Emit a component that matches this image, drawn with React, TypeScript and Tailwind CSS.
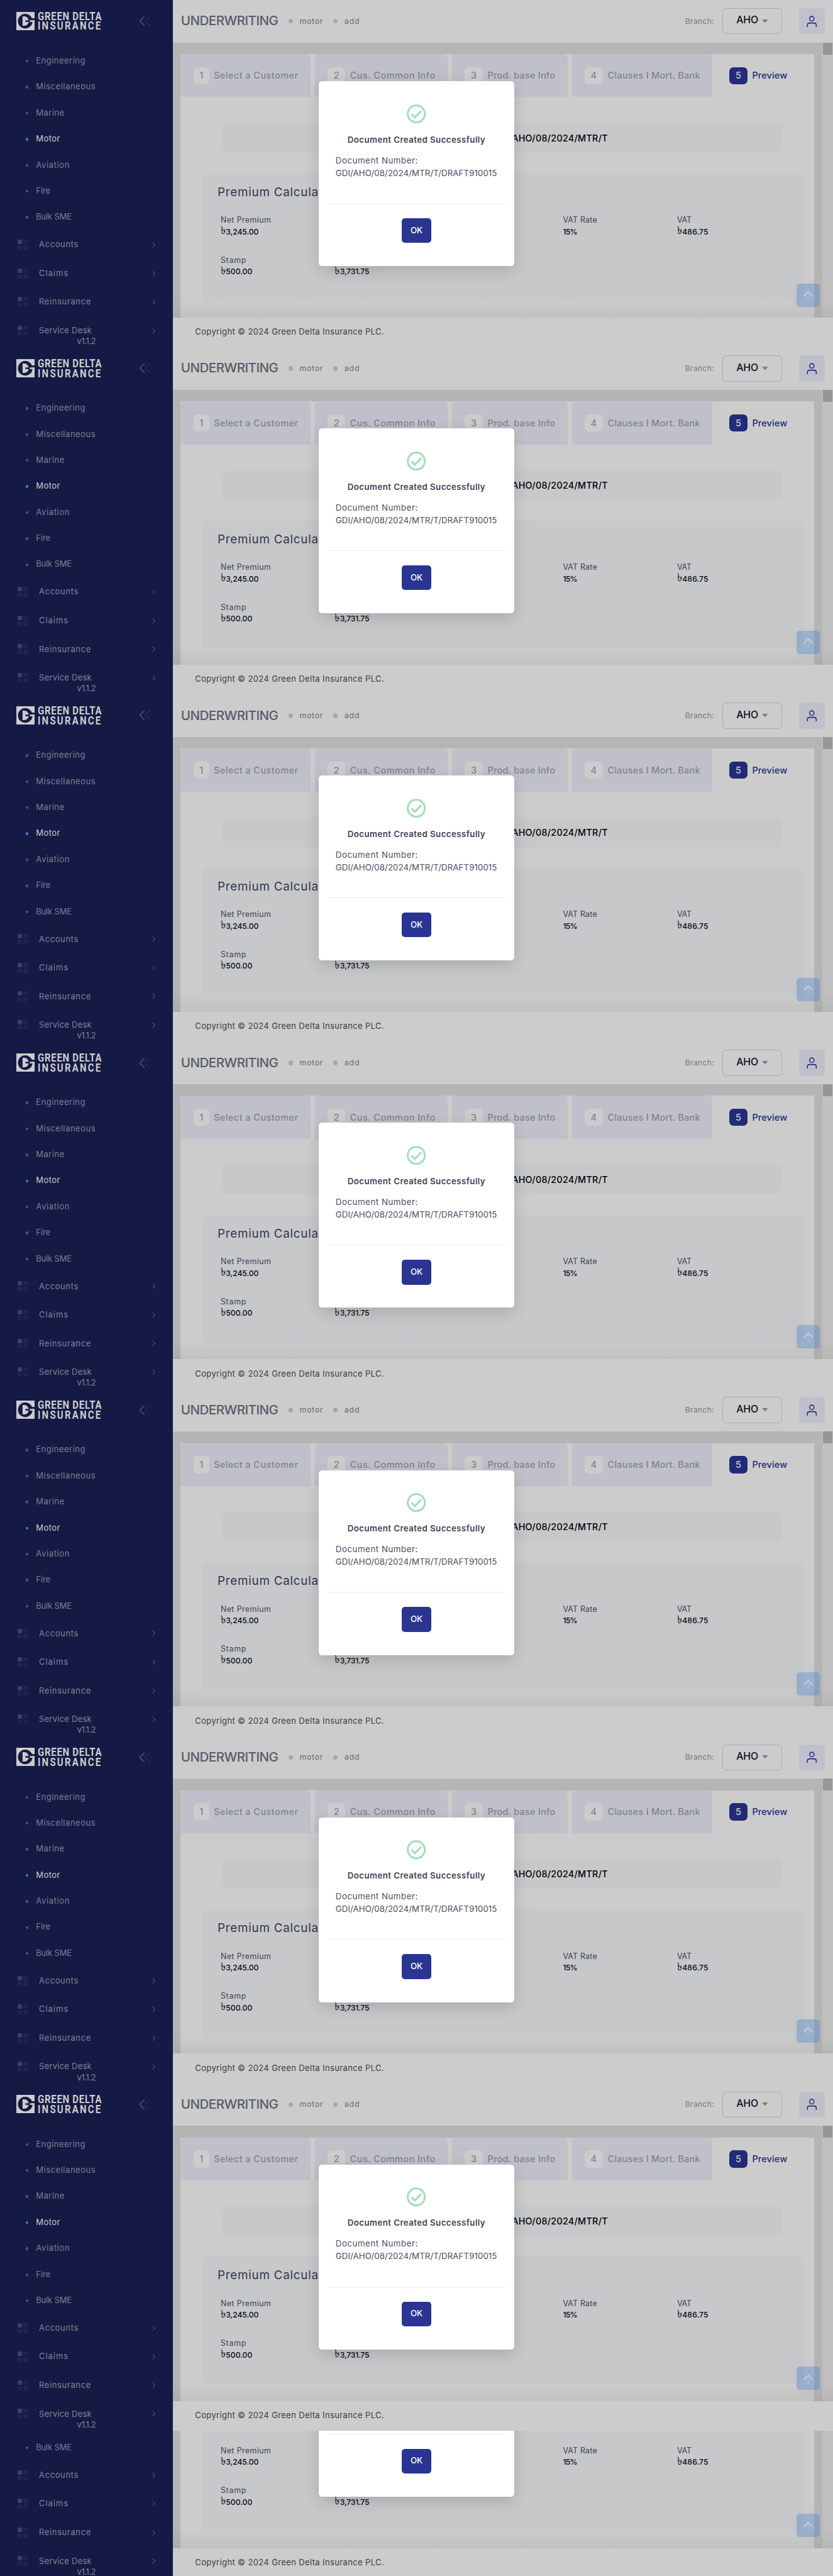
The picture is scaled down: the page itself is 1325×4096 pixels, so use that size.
import React from "react";

const subItems = [
  { label: "Engineering", cls: "tracking-[0.48px]" },
  { label: "Miscellaneous", cls: "tracking-[0.53px]" },
  { label: "Marine", cls: "tracking-[0.5px]" },
  { label: "Motor", cls: "tracking-[0.46px]", active: true },
  { label: "Aviation", cls: "tracking-[0.64px]" },
  { label: "Fire", cls: "tracking-[-0.08px]" },
  { label: "Bulk SME", cls: "tracking-[-0.18px]" },
];

const groups = [
  { label: "Accounts", cls: "tracking-[0.6px]" },
  { label: "Claims", cls: "tracking-[0.93px]" },
  { label: "Reinsurance", cls: "tracking-[0.62px]" },
  { label: "Service Desk", cls: "tracking-[0.23px]" },
];

const tabs = [
  { n: "1", label: "Select a Customer", tab: "w-[207px] pl-[20.7px]", box: "w-[24.8px]", text: "tracking-[0.45px]" },
  { n: "2", label: "Cus. Common Info", tab: "w-[211.2px] pl-[20px]", box: "w-[28.3px]", text: "tracking-[0.48px]" },
  { n: "3", label: "Prod. base Info", tab: "w-[183.6px] pl-[20px]", box: "w-[29px]", text: "tracking-[0.21px]" },
  { n: "4", label: "Clauses I Mort. Bank", tab: "w-[223.6px] pl-[20px]", box: "w-[29.6px]", text: "tracking-[0.24px]" },
];

const cells = [
  { label: "Net Premium", value: "3,245.00", taka: true, l: "tracking-[0.42px]", v: "tracking-[-0.07px]" },
  null,
  null,
  { label: "VAT Rate", value: "15%", taka: false, l: "tracking-[0.22px]", v: "tracking-[-0.7px]" },
  { label: "VAT", value: "486.75", taka: true, l: "", v: "tracking-[0.1px]" },
  { label: "Stamp", value: "500.00", taka: true, l: "tracking-[0.78px]", v: "tracking-[0px]" },
  { label: "", value: "3,731.75", taka: true, l: "", v: "tracking-[-0.2px]" },
];

function LogoMark() {
  return (
    <svg viewBox="0 0 42 42" className="h-[29px] w-[29px] shrink-0">
      <rect width="42" height="42" fill="#cccccc" />
      <circle cx="20.5" cy="21.2" r="16.8" fill="#151a45" />
      <rect x="33" y="14.7" width="9" height="4.5" fill="#151a45" />
      <path d="M14.3 10.3H19.5A11 11 0 0 1 19.5 32H14.3Z" fill="#cccccc" />
      <rect x="21" y="19.2" width="10.5" height="3.8" fill="#151a45" />
      <rect x="31" y="19.2" width="11" height="3.8" fill="#cccccc" />
    </svg>
  );
}

// `tail` screens show only their lower part, so the content above it is left out.
type TailProps = { tail?: boolean };

function Sidebar({ tail }: TailProps) {
  return (
    <aside className="flex h-full w-[274.7px] shrink-0 flex-col bg-[#151a45]">
      <div className="flex h-[76.6px] shrink-0 items-start pt-[18.7px] pl-[26.2px]">
        {!tail && (
          <>
            <LogoMark />
            <div className="ml-[4.6px] flex w-[160.8px] flex-col font-['Roboto',sans-serif] text-[19.2px] leading-[15.8px] font-bold text-[#cccccc]">
              <span className="-mt-[1px] origin-left scale-x-[0.78] whitespace-nowrap tracking-[0.95px]">GREEN DELTA</span>
              <span className="origin-left scale-x-[0.78] whitespace-nowrap tracking-[2.85px]">INSURANCE</span>
            </div>
            <svg viewBox="0 0 26 24" className="mt-[6.6px] h-[16.6px] w-[18px]" fill="none" strokeWidth="3" strokeLinecap="round" strokeLinejoin="round">
              <path d="M12 2L2 12L12 22" stroke="#434468" />
              <path d="M24 2L14 12L24 22" stroke="#22274f" />
            </svg>
          </>
        )}
      </div>
      <nav className="flex h-[455.5px] shrink-0 flex-col overflow-hidden">
        {subItems.map((s, i) => (
          <div key={s.label} className="flex h-[41.4px] shrink-0 items-center gap-[11.8px] pl-[41.4px]">
            {(!tail || i === subItems.length - 1) && (
              <>
                <span className={s.active ? "h-[4.4px] w-[4.1px] rounded-full bg-[#2f81cc]" : "h-[4.4px] w-[4.1px] rounded-full bg-[#505471]"} />
                <span className={`${s.cls} -mt-px text-[13px] whitespace-nowrap ${s.active ? "text-[#cccccc]" : "text-[#7b7d8e]"}`}>{s.label}</span>
              </>
            )}
          </div>
        ))}
        {groups.map((g) => (
          <div key={g.label} className="flex h-[45.55px] shrink-0 items-center pr-[27.2px] pl-[27.9px]">
            <div className="grid w-[16.2px] grid-cols-2 gap-[1.8px]">
              <span className="h-[7px] rounded-[1.5px] bg-[#3d3f60]" />
              <span className="h-[7px] rounded-[1.5px] bg-[#20244e]" />
              <span className="h-[7px] rounded-[1.5px] bg-[#20244e]" />
              <span className="h-[7px] rounded-[1.5px] bg-[#20244e]" />
            </div>
            <span className={`${g.cls} ml-[18px] flex-1 text-[13px] whitespace-nowrap text-[#7f8294]`}>{g.label}</span>
            <svg viewBox="0 0 8 12" className="h-[8.3px] w-[5.5px]" fill="none" stroke="#656880" strokeWidth="1.4" strokeLinecap="round" strokeLinejoin="round">
              <path d="M1 1L7 6L1 11" />
            </svg>
          </div>
        ))}
      </nav>
      <span className="ml-[122.5px] text-[13px] leading-[20px] tracking-[-0.4px] text-[#7f8294]">v1.1.2</span>
    </aside>
  );
}

function Header() {
  return (
    <>
      <h1 className="text-[20.6px] font-medium tracking-[-0.54px] text-[#565d69]">UNDERWRITING</h1>
      <span className="ml-[16.4px] h-[7.4px] w-[7.4px] rounded-full bg-[#a5a9ae]" />
      <span className="ml-[10.4px] text-[12.3px] tracking-[0.7px] text-[#636a77]">motor</span>
      <span className="ml-[15.8px] h-[7.4px] w-[7.4px] rounded-full bg-[#a5a9ae]" />
      <span className="ml-[10.4px] text-[12.3px] tracking-[0.95px] text-[#636a77]">add</span>
      <span className="ml-auto text-[12.2px] tracking-[0.27px] text-[#747983]">Branch:</span>
      <div className="ml-[13.1px] flex h-[41.4px] w-[94.5px] items-center rounded-[6px] border border-[#a9aabf] pb-[3px] pl-[21px]">
        <span className="text-[15.8px] font-medium text-[#0a0e1f]">AHO</span>
        <svg viewBox="0 0 14 8" className="mt-[2px] ml-[6px] h-[5.4px] w-[9.7px]">
          <path d="M0 0H14L7 8Z" fill="#7d7d7d" />
        </svg>
      </div>
      <div className="ml-[26.9px] flex h-[41.4px] w-[41.4px] items-center justify-center rounded-[5.5px] bg-[#bfc0ca]">
        <svg viewBox="0 0 24 26" className="h-[18px] w-[16.6px]" fill="none" stroke="#222b78" strokeWidth="2.2" strokeLinecap="round">
          <circle cx="12" cy="6.8" r="5.2" />
          <path d="M1.8 25V21.5Q1.8 16.8 7 16.8H17Q22.2 16.8 22.2 21.5V25" />
        </svg>
      </div>
    </>
  );
}

function Tabs() {
  return (
    <div className="flex h-full gap-[6.9px] text-[14.5px] font-[450] whitespace-nowrap text-[#7f8493]">
      {tabs.map((t) => (
        <div key={t.n} className={`${t.tab} flex shrink-0 items-center rounded-t-[6px] bg-[#c0c0ca]`}>
          <span className={`${t.box} flex h-[27.6px] shrink-0 items-center justify-center rounded-[6.5px] bg-[#cccccc] font-medium`}>{t.n}</span>
          <span className={`${t.text} ml-[7.4px]`}>{t.label}</span>
        </div>
      ))}
      <div className="flex flex-1 items-center pl-[20px] text-[#222b78]">
        <span className="flex h-[27.6px] w-[29px] shrink-0 items-center justify-center rounded-[6.5px] bg-[#222b78] font-medium text-[#cccccc]">5</span>
        <span className="ml-[7.4px] tracking-[0.1px]">Preview</span>
      </div>
    </div>
  );
}

function PremiumCard({ tail }: TailProps) {
  return (
    <section className="ml-[33.8px] h-[202.9px] w-[957.2px] rounded-[8px] bg-[#c6c8ca] pt-[17.7px]">
      <h2 className="h-[24px] pl-[25.2px] text-[18.8px] leading-[24px] tracking-[0.76px] text-[#35354a]">{!tail && "Premium Calcula"}</h2>
      <div className="mt-[23.6px] grid grid-cols-[repeat(5,181.5px)] gap-y-[26.5px] pl-[30px] text-[12.4px] leading-[18.5px] whitespace-nowrap">
        {cells.map((c, i) =>
          c ? (
            <div key={i} className="h-[37px]">
              <div className={`${c.l} h-[18.5px] text-[#414154]`}>{c.label}</div>
              <div className={`${c.v} flex h-[18.5px] text-[12.2px] font-[450] text-[#0b0d16]`}>
                {c.taka && <span className="-mt-[2.5px] w-[8.4px] font-sans text-[16.5px] font-normal tracking-normal">৳</span>}
                <span>{c.value}</span>
              </div>
            </div>
          ) : (
            <div key={i} />
          ),
        )}
      </div>
    </section>
  );
}

function Modal({ tail }: TailProps) {
  return (
    <div className="absolute top-[129.2px] left-[507.2px] z-10 flex h-[294px] w-[310.5px] flex-col rounded-[5.5px] bg-white shadow-[0_8px_24px_rgba(0,0,0,0.15)]">
      <div className="flex h-[193.8px] shrink-0 flex-col pt-[36.6px]">
        {!tail && (
          <>
            <svg viewBox="0 0 44 44" className="mx-auto h-[30.4px] w-[30.4px] shrink-0" fill="none" stroke="#a9dfbf">
              <circle cx="22" cy="22" r="19.6" strokeWidth="4.8" />
              <path d="M11 22.5L18.5 30L33.5 15" strokeWidth="5" />
            </svg>
            <div className="mt-[15.5px] text-center text-[13.3px] leading-[20px] font-semibold tracking-[0.42px] whitespace-nowrap text-[#3f4254]">Document Created Successfully</div>
            <div className="mt-[14.2px] ml-[26.6px] text-[13.3px] leading-[19.7px] whitespace-nowrap text-[#4b4e62]">
              <div className="tracking-[0.53px]">Document Number:</div>
              <div className="tracking-[0.065px]">GDI/AHO/08/2024/MTR/T/DRAFT910015</div>
            </div>
          </>
        )}
      </div>
      <div className="mx-[13.6px] h-px shrink-0 bg-[#ececf4]" />
      <button className="mx-auto mt-[23px] h-[39.3px] w-[46.9px] rounded-[5px] bg-[#2a3592] text-[13.3px] font-medium tracking-[-0.35px] text-white">OK</button>
    </div>
  );
}

function Screen({ tail }: TailProps) {
  return (
    <div className="relative flex h-[552.1px] w-[1325px] shrink-0 overflow-hidden bg-[#cccccc]">
      <Sidebar tail={tail} />
      <main className="flex min-w-0 flex-1 flex-col">
        <header className="flex h-[67.6px] shrink-0 items-center bg-[#cccccc] px-[13.1px] whitespace-nowrap">{!tail && <Header />}</header>
        <div className="relative flex h-[437.4px] shrink-0 bg-[#b5b5b5] pl-[12.4px]">
          <div className="mt-[18.6px] w-[1007.5px] shrink-0 bg-[#cccccc]">
            <div className="h-[68.3px]">{!tail && <Tabs />}</div>
            <div className="mt-[41.4px] ml-[66.9px] flex h-[46.9px] w-[890.9px] items-center justify-end rounded-[8px] bg-[#c6c8ca] pr-[278px] text-[14.3px] font-[450] tracking-[0.3px] text-black">
              {!tail && "AHO/08/2024/MTR/T"}
            </div>
            <div className="h-[33.1px]" />
            <PremiumCard tail={tail} />
          </div>
          <div className="ml-auto w-[17.3px] bg-[#c0c0c0] pl-[1.4px]">
            <div className="h-[19.3px] w-[14.5px] bg-[#979797]" />
          </div>
          <div className="absolute inset-x-0 bottom-0 h-[29px] bg-linear-to-b from-transparent to-[rgba(50,50,60,0.07)]" />
          <div className="absolute right-[20.7px] bottom-[17.2px] flex h-[37.3px] w-[37.3px] justify-center rounded-[5.5px] bg-[rgba(61,124,204,0.35)] pt-[11.5px] shadow-[0_0_20px_rgba(0,0,0,0.03)]">
            <svg viewBox="0 0 22 24" className="h-[16.6px] w-[15.2px]" fill="none" strokeLinecap="round" strokeLinejoin="round">
              <path d="M11 9V22" stroke="#a9bccf" strokeWidth="3" />
              <path d="M2 12L11 2.5L20 12" stroke="#cccccc" strokeWidth="3" />
            </svg>
          </div>
        </div>
        <footer className="flex flex-1 items-center bg-[#cccccc] pb-[1px] pl-[35.6px] text-[13px] tracking-[0.37px] text-[#363e4b]">Copyright © 2024 Green Delta Insurance PLC.</footer>
      </main>
      <Modal tail={tail} />
    </div>
  );
}

export default function App() {
  return (
    <div className="flex h-[4096px] w-[1325px] flex-col overflow-hidden bg-[#cccccc] font-['Inter',sans-serif]">
      {[0, 1, 2, 3, 4, 5, 6].map((i) => (
        <Screen key={i} />
      ))}
      <div className="flex flex-1 flex-col overflow-hidden">
        <div className="-mt-[318.1px]">
          <Screen tail />
        </div>
      </div>
    </div>
  );
}
